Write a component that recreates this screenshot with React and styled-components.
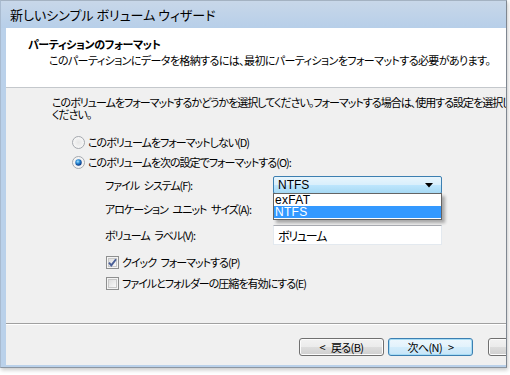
import React from "react";
import styled, { createGlobalStyle } from "styled-components";

const GlobalStyle = createGlobalStyle`
  html, body {
    margin: 0;
    padding: 0;
    background: #ffffff;
  }
  body {
    width: 510px;
    height: 375px;
    overflow: hidden;
    font-family: "Noto Sans CJK JP", "Noto Sans", sans-serif;
    font-feature-settings: "palt";
    color: #000;
  }
`;

const Window = styled.div`
  width: 505px;
  height: 366px;
  display: flex;
  flex-direction: column;
  background: #bad1ea;
  border-top: 1px solid #a4b2c2;
  border-left: 1px solid #a9bbd0;
  border-right: 1px solid #7f8791;
  border-bottom: 1px solid #8c96a1;
  box-shadow: 1px 2px 4px rgba(0, 0, 0, 0.22);
  overflow: hidden;
`;

const TitleBar = styled.div`
  height: 27px;
  flex: none;
  display: flex;
  align-items: center;
  padding-left: 9px;
  font-size: 13px;
  letter-spacing: 0;
  background: linear-gradient(#c8d7e9, #b7cfe9);
`;

const Client = styled.div`
  flex: 1;
  display: flex;
  flex-direction: column;
  margin: 0 0 2px 5px;
  background: #f0f0f0;
  font-size: 11px;
  letter-spacing: -1px;
  word-spacing: 3px;
  white-space: nowrap;
  overflow: hidden;
`;

const Header = styled.div`
  height: 60px;
  flex: none;
  background: #ffffff;
  border-bottom: 1px solid #c4c8cc;
  padding-top: 9px;
  box-sizing: border-box;
`;

const HeaderTitle = styled.div`
  padding-left: 22px;
  font-weight: bold;
  line-height: 14px;
  letter-spacing: -0.4px;
`;

const HeaderSub = styled.div`
  padding-left: 43px;
  line-height: 18px;
  letter-spacing: -0.6px;
`;

const Body = styled.div`
  flex: 1;
  padding: 8px 0 0 46px;
`;

const Intro = styled.div`
  line-height: 12px;
`;

const Row = styled.div`
  display: flex;
  align-items: center;
  height: 20px;
  margin-top: ${(p) => p.$top || 0}px;
  margin-left: ${(p) => p.$indent || 0}px;
  gap: ${(p) => (p.$gap === undefined ? 3 : p.$gap)}px;
`;

const Label = styled.div`
  width: 168px;
  flex: none;
`;

const ComboWrap = styled.div`
  position: relative;
  width: 169px;
`;

const Combo = styled.div`
  height: 18px;
  box-sizing: border-box;
  border: 1px solid #3c7fb1;
  border-radius: 2px;
  background: linear-gradient(#e8f5fc 0%, #d8effc 50%, #bde6fd 51%, #a6d9f4 100%);
  display: flex;
  align-items: center;
  justify-content: space-between;
  padding: 0 8px 0 4px;
  font-family: "Liberation Sans", Arial, sans-serif;
  font-size: 12px;
  letter-spacing: 0;
`;

const DropList = styled.div`
  position: absolute;
  left: 0;
  top: 17px;
  width: 169px;
  box-sizing: border-box;
  border: 1px solid #646464;
  padding-bottom: 1px;
  background: #ffffff;
  box-shadow: 3px 3px 3px rgba(0, 0, 0, 0.3);
  font-family: "Liberation Sans", Arial, sans-serif;
  font-size: 12px;
  letter-spacing: 0.3px;
  z-index: 2;
`;

const DropItem = styled.div`
  height: 12px;
  line-height: 12px;
  padding-left: 1px;
  background: ${(p) => (p.$active ? "#3399ff" : "transparent")};
  color: ${(p) => (p.$active ? "#ffffff" : "#000000")};
`;

const TextBox = styled.div`
  width: 169px;
  height: 20px;
  box-sizing: border-box;
  background: #ffffff;
  border: 1px solid #e3e9ef;
  border-top-color: #abadb3;
  padding-left: 4px;
  display: flex;
  align-items: center;
  font-size: 12px;
  letter-spacing: -1.2px;
`;

const Footer = styled.div`
  height: 42px;
  flex: none;
  border-top: 1px solid #a0a0a0;
  box-shadow: inset 0 1px 0 #ffffff;
  display: flex;
  align-items: flex-start;
  padding: 14px 0 0 293px;
  box-sizing: border-box;
`;

const Button = styled.div`
  width: 85px;
  height: 18px;
  flex: none;
  box-sizing: border-box;
  margin-right: ${(p) => p.$gap || 4}px;
  border: 1px solid ${(p) => (p.$focus ? "#3c7fb1" : "#707070")};
  border-radius: 3px;
  background: ${(p) =>
    p.$focus
      ? "linear-gradient(#edf7fd 0%, #e2f2fc 50%, #d3ecfb 51%, #c6e5f8 100%)"
      : "linear-gradient(#f2f2f2 0%, #ebebeb 50%, #dddddd 51%, #cfcfcf 100%)"};
  box-shadow: inset 0 0 0 1px ${(p) => (p.$focus ? "#a6dcf5" : "#fcfcfc")};
  display: flex;
  align-items: center;
  justify-content: center;
  letter-spacing: -0.6px;
  word-spacing: 4px;
`;

const Radio = ({ checked }) => (
  <svg width="13" height="13" viewBox="0 0 13 13">
    <defs>
      <radialGradient id={checked ? "rg1" : "rg0"} cx="0.5" cy="0.5" r="0.5">
        <stop offset="0" stopColor="#e6e6e6" />
        <stop offset="1" stopColor="#f8f8f8" />
      </radialGradient>
      <radialGradient id="dot" cx="0.4" cy="0.35" r="0.6">
        <stop offset="0" stopColor="#a4e0ff" />
        <stop offset="0.5" stopColor="#2a8bd6" />
        <stop offset="1" stopColor="#0c3d8a" />
      </radialGradient>
    </defs>
    <circle cx="6.5" cy="6.5" r="6" fill={`url(#${checked ? "rg1" : "rg0"})`} stroke="#a3a7ad" />
    {checked && <circle cx="6.5" cy="6.5" r="3.2" fill="url(#dot)" />}
  </svg>
);

const Check = ({ checked }) => (
  <svg width="13" height="13" viewBox="0 0 13 13">
    <defs>
      <linearGradient id="cb" x1="0" y1="0" x2="1" y2="1">
        <stop offset="0" stopColor="#dcdcdc" />
        <stop offset="1" stopColor="#fbfbfb" />
      </linearGradient>
    </defs>
    <rect x="0.5" y="0.5" width="12" height="12" fill="#f4f4f4" stroke="#8e8f8f" />
    <rect x="2.5" y="2.5" width="8" height="8" fill="url(#cb)" stroke="#c8c8c8" />
    {checked && (
      <path d="M3 6.6 L5.3 9.4 L10 3.2" fill="none" stroke="#4a5f97" strokeWidth="1.9" />
    )}
  </svg>
);

const Arrow = () => (
  <svg width="8" height="5" viewBox="0 0 8 5">
    <path d="M0 0 H8 L4 4.5 Z" fill="#000" />
  </svg>
);

export default function App() {
  return (
    <>
      <GlobalStyle />
      <Window>
        <TitleBar>新しいシンプル ボリューム ウィザード</TitleBar>
        <Client>
          <Header>
            <HeaderTitle>パーティションのフォーマット</HeaderTitle>
            <HeaderSub>
              このパーティションにデータを格納するには、最初にパーティションをフォーマットする必要があります。
            </HeaderSub>
          </Header>
          <Body>
            <Intro>
              このボリュームをフォーマットするかどうかを選択してください。フォーマットする場合は、使用する設定を選択して
              <br />
              ください。
            </Intro>
            <Row $top={12} $indent={20}>
              <Radio />
              <span>このボリュームをフォーマットしない(D)</span>
            </Row>
            <Row $indent={20}>
              <Radio checked />
              <span>このボリュームを次の設定でフォーマットする(O):</span>
            </Row>
            <Row $top={3} $indent={53} $gap={0}>
              <Label>ファイル システム(F):</Label>
              <ComboWrap>
                <Combo>
                  <span>NTFS</span>
                  <Arrow />
                </Combo>
                <DropList>
                  <DropItem>exFAT</DropItem>
                  <DropItem $active>NTFS</DropItem>
                </DropList>
              </ComboWrap>
            </Row>
            <Row $top={4} $indent={53} $gap={0}>
              <Label>アロケーション ユニット サイズ(A):</Label>
            </Row>
            <Row $top={6} $indent={53} $gap={0}>
              <Label>ボリューム ラベル(V):</Label>
              <TextBox>ボリューム</TextBox>
            </Row>
            <Row $top={7} $indent={54}>
              <Check checked />
              <span>クイック フォーマットする(P)</span>
            </Row>
            <Row $top={1} $indent={54}>
              <Check />
              <span>ファイルとフォルダーの圧縮を有効にする(E)</span>
            </Row>
          </Body>
          <Footer>
            <Button>&lt; 戻る(B)</Button>
            <Button $focus $gap={15}>次へ(N) &gt;</Button>
            <Button>キャンセル</Button>
          </Footer>
        </Client>
      </Window>
    </>
  );
}
